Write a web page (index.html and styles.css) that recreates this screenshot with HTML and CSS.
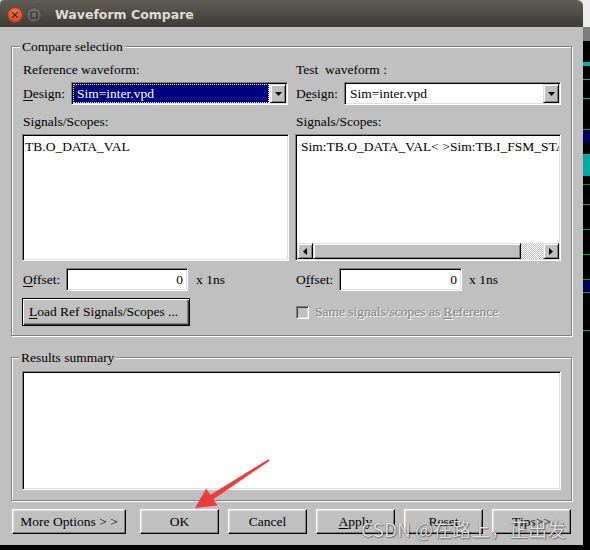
FILE: index.html
```html
<!DOCTYPE html>
<html>
<head>
<meta charset="utf-8">
<link rel="stylesheet" href="styles.css">
</head>
<body>
<div class="screen">
  <div class="window">
    <div class="titlebar">
      <span class="tb-btn">
        <svg width="16" height="16" viewBox="0 0 16 16"><defs><radialGradient id="rg" cx="50%" cy="35%" r="60%"><stop offset="0" stop-color="#f47a4b"/><stop offset="1" stop-color="#d9491f"/></radialGradient></defs><circle cx="8" cy="8" r="7.4" fill="url(#rg)" stroke="#9a3416" stroke-width="0.6"/><path d="M5.6 5.6l4.8 4.8M10.4 5.6l-4.8 4.8" stroke="#3a1a10" stroke-width="1.3" stroke-linecap="round"/></svg>
      </span>
      <span class="tb-btn tb-min">
        <svg width="16" height="16" viewBox="0 0 16 16"><defs><radialGradient id="gg" cx="50%" cy="35%" r="60%"><stop offset="0" stop-color="#7a7973"/><stop offset="1" stop-color="#5c5b56"/></radialGradient></defs><circle cx="8" cy="8" r="7.4" fill="url(#gg)" stroke="#3e3d39" stroke-width="0.6"/><rect x="5" y="5" width="6" height="6" rx="1" fill="none" stroke="#2c2b28" stroke-width="1.2"/></svg>
      </span>
      <span class="title">Waveform Compare</span>
    </div>
    <div class="dialog">
      <div class="group compare">
        <div class="group-title">Compare selection</div>
        <div class="cols">
          <div class="col">
            <div class="lbl">Reference waveform:</div>
            <div class="row">
              <span class="rlabel"><u>D</u>esign:</span>
              <div class="combo sunken">
                <div class="combo-val sel">Sim=inter.vpd</div>
                <div class="drop raised"><svg width="7" height="4" viewBox="0 0 7 4"><path d="M0 0h7L3.5 4z" fill="#000"/></svg></div>
              </div>
            </div>
            <div class="lbl lbl-sig">Signals/Scopes:</div>
            <div class="list sunken">
              <div class="items items-left">TB.O_DATA_VAL</div>
            </div>
            <div class="row offset-row">
              <span class="olabel"><u>O</u>ffset:</span>
              <div class="input sunken">0</div>
              <span class="unit">x 1ns</span>
            </div>
            <div class="row btn-row">
              <div class="btn btn-default">
                <span><u>L</u>oad Ref Signals/Scopes ...</span>
              </div>
            </div>
          </div>
          <div class="col">
            <div class="lbl">Test&nbsp; waveform :</div>
            <div class="row">
              <span class="rlabel">D<u>e</u>sign:</span>
              <div class="combo sunken">
                <div class="combo-val">Sim=inter.vpd</div>
                <div class="drop raised"><svg width="7" height="4" viewBox="0 0 7 4"><path d="M0 0h7L3.5 4z" fill="#000"/></svg></div>
              </div>
            </div>
            <div class="lbl lbl-sig">Signals/Scopes:</div>
            <div class="list sunken">
              <div class="items items-right">Sim:TB.O_DATA_VAL&lt; &gt;Sim:TB.I_FSM_STATE</div>
              <div class="hscroll">
                <div class="sb-arrow raised"><svg width="4" height="7" viewBox="0 0 4 7"><path d="M4 0v7L0 3.5z" fill="#000"/></svg></div>
                <div class="sb-thumb raised"></div>
                <div class="sb-track"></div>
                <div class="sb-arrow raised"><svg width="4" height="7" viewBox="0 0 4 7"><path d="M0 0v7L4 3.5z" fill="#000"/></svg></div>
              </div>
            </div>
            <div class="row offset-row">
              <span class="olabel">O<u>f</u>fset:</span>
              <div class="input input-r sunken">0</div>
              <span class="unit unit-r">x 1ns</span>
            </div>
            <div class="row btn-row">
              <span class="check"></span>
              <span class="disabled">Same signals/scopes as <u>R</u>eference</span>
            </div>
          </div>
        </div>
      </div>
      <div class="group results">
        <div class="group-title results-title">Results summary</div>
        <div class="result-box sunken"></div>
      </div>
      <div class="buttons">
        <div class="btn btn-wide">More Options &gt; &gt;</div>
        <div class="btn">OK</div>
        <div class="btn">Cancel</div>
        <div class="btn"><span><u>A</u>pply</span></div>
        <div class="btn">Reset</div>
        <div class="btn">Tips&gt;&gt;</div>
      </div>
    </div>
  </div>
  <div class="strip"></div>
  <svg class="arrow" width="590" height="550" viewBox="0 0 590 550">
    <polygon points="195,508 217.5,505.5 213.4,499.3 269.6,460.8 268.4,459.2 210.3,494.9 206.2,488.5" fill="#ee3b3b"/>
  </svg>
  <div class="watermark">CSDN @在路上，正出发</div>
</div>
</body>
</html>
```
FILE: styles.css
```css
* { box-sizing: border-box; margin: 0; padding: 0; }
body {
  margin: 0;
  background: #000;
  font-family: "Liberation Serif", "Times New Roman", serif;
  font-size: 13.5px;
  color: #000;
}
u { text-decoration: underline; text-underline-offset: 2px; }

.screen {
  position: relative;
  width: 590px;
  height: 550px;
  display: flex;
  align-items: flex-start;
  overflow: hidden;
  background: #000;
}
.window {
  width: 583px;
  height: 545px;
  display: flex;
  flex-direction: column;
  background: #e2e2e2;
}
.titlebar {
  height: 27px;
  flex: none;
  display: flex;
  align-items: center;
  padding: 2px 0 0 7px;
  background: linear-gradient(#605e56, #3c3b37);
  border-radius: 4px 6px 0 0;
}
.tb-btn { display: block; width: 16px; height: 16px; }
.tb-btn svg { display: block; }
.tb-min { margin-left: 3px; }
.title {
  margin-left: 13px;
  font-family: "DejaVu Sans", sans-serif;
  font-weight: bold;
  font-size: 12.5px;
  line-height: 16px;
  color: #dfdbd2;
}

.dialog {
  flex: 1;
  background: #c0c0c0;
  padding: 19px 0 0 11px;
}

/* 3D helpers */
.sunken {
  border: 1px solid;
  border-color: #808080 #fff #fff #808080;
  box-shadow: inset 1px 1px 0 #000, inset -1px -1px 0 #dfdfdf;
  padding: 1px;
  background: #fff;
}
.raised {
  background: #c0c0c0;
  border: 1px solid;
  border-color: #dfdfdf #000 #000 #dfdfdf;
  box-shadow: inset 1px 1px 0 #fff, inset -1px -1px 0 #808080;
}

/* group boxes */
.group {
  width: 561px;
  border: 1px solid #808080;
  box-shadow: inset 1px 1px 0 #fff, 1px 1px 0 #fff;
}
.group-title {
  width: max-content;
  margin: -8px 0 0 8px;
  padding: 0 2px;
  line-height: 15px;
  background: #c0c0c0;
}
.compare { padding-bottom: 9px; }
.cols {
  display: grid;
  grid-template-columns: 267px 266px;
  column-gap: 6px;
  margin: 8px 0 0 10px;
}
.col { display: flex; flex-direction: column; }
.lbl {
  height: 16px;
  line-height: 16px;
  padding-left: 1px;
  white-space: nowrap;
}
.lbl-sig { margin-top: 9px; }
.row {
  display: flex;
  align-items: center;
  height: 23px;
  margin-top: 4px;
  white-space: nowrap;
}
.rlabel { width: 49px; padding-left: 1px; flex: none; }

.combo {
  width: 217px;
  height: 23px;
  display: flex;
}
.combo-val {
  flex: 1;
  display: flex;
  align-items: center;
  padding-left: 3px;
  border: 1px solid transparent;
  margin-right: 1px;
}
.combo-val.sel {
  background: #000080;
  color: #fff;
  border: 1px dotted #f0f0a0;
}
.drop {
  width: 16px;
  flex: none;
  display: flex;
  align-items: center;
  justify-content: center;
}
.drop svg { display: block; }

.list {
  height: 127px;
  margin-top: 4px;
  display: flex;
  flex-direction: column;
  overflow: hidden;
}
.items {
  flex: 1;
  padding-top: 3px;
  line-height: 16px;
  white-space: nowrap;
  overflow: hidden;
}
.items-left { padding-left: 1px; }
.items-right { padding-left: 4px; }

.hscroll {
  height: 16px;
  flex: none;
  display: flex;
}
.sb-arrow {
  width: 16px;
  flex: none;
  display: flex;
  align-items: center;
  justify-content: center;
}
.sb-arrow svg { display: block; }
.sb-thumb { width: 208px; flex: none; }
.sb-track {
  flex: 1;
  background: repeating-conic-gradient(#c0c0c0 0 25%, #fff 0 50%) 0 0 / 2px 2px;
}

.offset-row { margin-top: 7px; }
.olabel { width: 44px; padding-left: 1px; flex: none; }
.input {
  width: 122px;
  height: 23px;
  text-align: right;
  padding-right: 4px;
  line-height: 19px;
}
.input-r { width: 123px; }
.unit { margin-left: 8px; }
.unit-r { margin-left: 7px; }

.btn-row { margin-top: 7px; height: 28px; }
.btn {
  height: 25px;
  width: 79px;
  flex: none;
  display: flex;
  align-items: center;
  justify-content: center;
  background: #c0c0c0;
  border: 1px solid;
  border-color: #fff #000 #000 #fff;
  box-shadow: inset -1px -1px 0 #808080, inset 1px 1px 0 #dfdfdf;
  white-space: nowrap;
}
.btn-default {
  width: 168px;
  height: 28px;
  justify-content: flex-start;
  padding-left: 6px;
  border: 1px solid #000;
  box-shadow: inset 1px 1px 0 #fff, inset -1px -1px 0 #404040, inset -2px -2px 0 #808080;
}
.check {
  width: 13px;
  height: 13px;
  margin-left: 1px;
  flex: none;
  border: 1px solid;
  border-color: #808080 #fff #fff #808080;
  box-shadow: inset 1px 1px 0 #404040, inset -1px -1px 0 #dfdfdf;
  background: #c0c0c0;
}
.disabled {
  margin-left: 6px;
  color: #808080;
  text-shadow: 1px 1px 0 #fff;
}

.results { margin-top: 21px; padding-bottom: 10px; }
.results-title { margin-left: 7px; }
.result-box {
  width: 539px;
  height: 119px;
  margin: 6px 0 0 10px;
}

.buttons {
  display: flex;
  gap: 9px;
  margin: 8px 0 0 1px;
}
.btn-wide { width: 114px; margin-right: 5px; }

/* background waveform window peeking at the right */
.strip {
  width: 7px;
  height: 550px;
  flex: none;
  background:
    linear-gradient(#ececec 0 27px, #7c7c7c 27px 41px, transparent 41px),
    linear-gradient(transparent 0 62px, #00b0b0 62px 66px, transparent 66px 79px, #00b4b4 79px 80px,
      transparent 80px 98px, #00b4b4 98px 99px, transparent 99px 129px, #00b000 129px 130px,
      #00005c 130px 143px, transparent 143px 154px, #00a8a8 154px 176px, transparent 176px 184px,
      #00a000 184px 185px, transparent 185px 204px, #00a0a0 204px 205px, transparent 205px 229px,
      #00b000 229px 230px, transparent 230px 254px, #00b000 254px 255px, transparent 255px 279px,
      #00b000 279px 280px, #00005c 280px 292px, #00b000 292px 293px, transparent 293px 330px,
      #00a0a0 330px 331px, transparent 331px),
    #000;
}

.arrow {
  position: absolute;
  left: 0;
  top: 0;
  pointer-events: none;
}
.watermark {
  position: absolute;
  left: 361px;
  top: 518px;
  font-family: "Noto Sans CJK SC", "Noto Sans", sans-serif;
  font-size: 19px;
  line-height: 22px;
  color: rgba(255, 255, 255, 0.85);
  text-shadow: 0 0 1px rgba(0, 0, 0, 0.7), 1px 1px 1px rgba(0, 0, 0, 0.35);
  white-space: nowrap;
}
```
